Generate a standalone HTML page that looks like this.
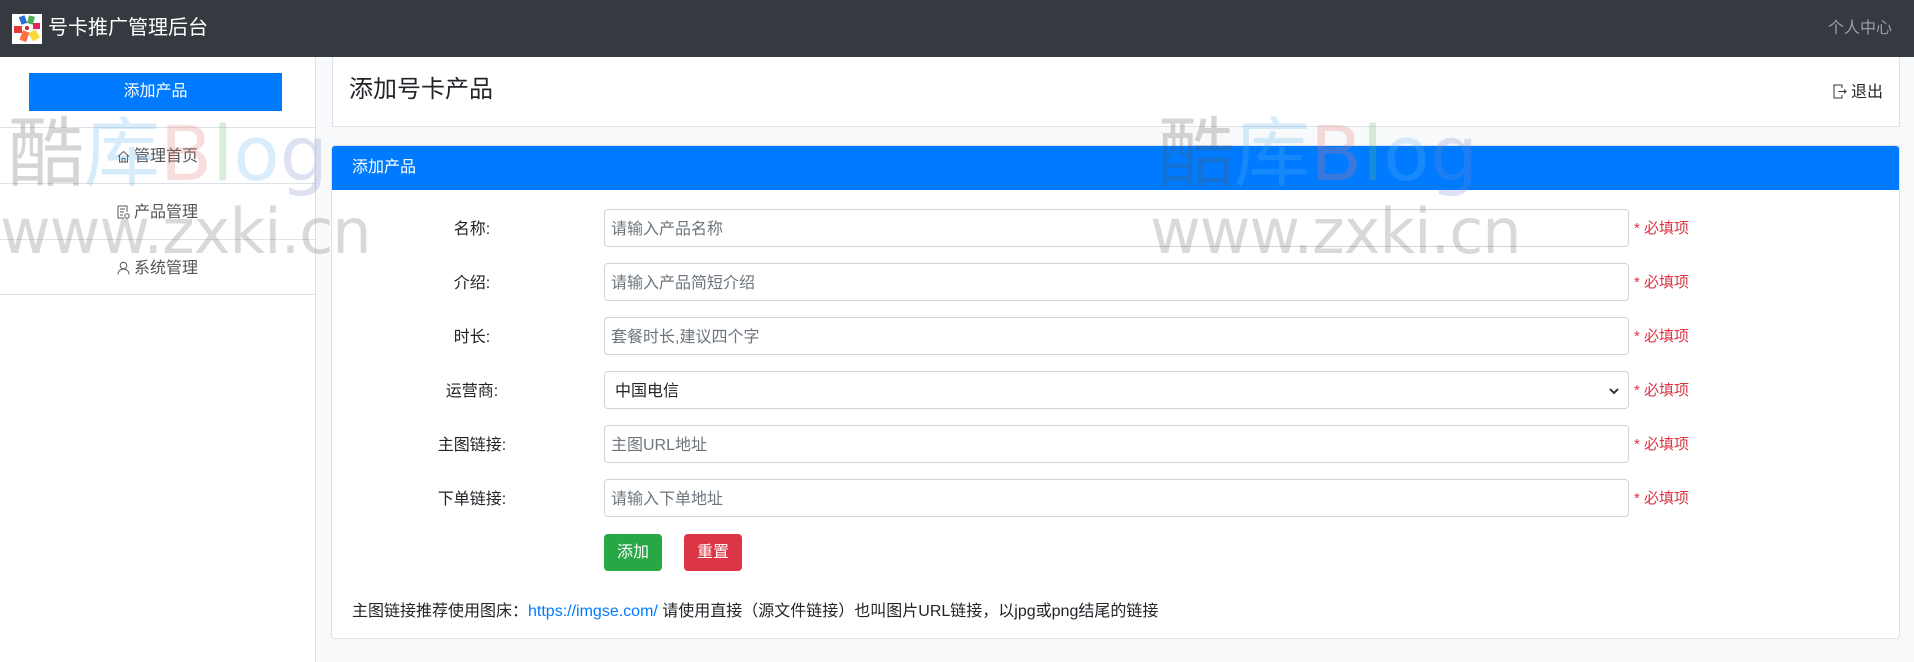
<!DOCTYPE html>
<html><head><meta charset="utf-8">
<style>
*{box-sizing:border-box;margin:0;padding:0}
body{width:1914px;height:662px;overflow:hidden;background:#f8f9fa;font-family:"Liberation Sans","Noto Sans CJK SC",sans-serif;color:#212529;position:relative;font-size:16px}
.nav{position:absolute;left:0;top:0;width:1914px;height:57px;background:#343a40}
.logo{position:absolute;left:12px;top:14px;width:30px;height:30px;background:#fff}
.brand{position:absolute;left:48px;top:13px;font-size:20px;color:#fff;line-height:30px}
.me{position:absolute;left:1828px;top:17px;font-size:16px;color:rgba(255,255,255,.5);line-height:24px}
.side{position:absolute;left:0;top:57px;width:316px;height:605px;background:#fff;border-right:1px solid #dee2e6}
.addbtn{position:absolute;left:29px;top:16px;width:253px;height:38px;background:#007bff;color:#fff;text-align:center;line-height:38px;font-size:16px}
.item{position:absolute;left:0;width:315px;height:56px;border-top:1px solid #dee2e6;color:#555;text-align:center;line-height:58px;font-size:16px}
.item svg{vertical-align:-2px;margin-right:4px}
.card1{position:absolute;left:332px;top:57px;width:1568px;height:70px;background:#fff;border:1px solid #dee2e6;border-top:none}
.card1 h2{position:absolute;left:16px;top:18px;font-size:24px;font-weight:400;line-height:30px}
.logout{position:absolute;left:1500px;top:24px;font-size:16px;line-height:24px}
.card2{position:absolute;left:331px;top:145px;width:1569px;height:494px;background:#fff;border:1px solid #dee2e6;border-radius:4px;overflow:hidden}
.ch{height:44px;background:#007bff;color:#fff;padding-left:20px;line-height:44px;font-size:16px}
.lbl{position:absolute;width:140px;left:70px;text-align:center;font-size:16px;line-height:42px}
.inp{position:absolute;left:272px;width:1025px;height:38px;border:1px solid #ced4da;border-radius:4px;padding-left:6px;line-height:39px;color:#6c757d;font-size:16px}
.req{position:absolute;left:1302px;color:#dc3545;font-size:15px;line-height:40px}
.btn{position:absolute;top:388px;width:58px;height:37px;border-radius:4px;color:#fff;text-align:center;line-height:38px;font-size:16px}
.foot{position:absolute;left:20px;top:454px;font-size:16px;line-height:24px}
.wm{position:absolute;pointer-events:none;opacity:.24;font-family:"DejaVu Sans","Noto Sans CJK SC",sans-serif}
</style></head><body>
<div class="nav">
 <div class="logo"><svg width="30" height="30" viewBox="0 0 30 30"><rect x="8" y="2" width="6" height="8" fill="#2b6fd6" transform="rotate(-20 11 6)"/><rect x="16" y="2" width="6" height="8" fill="#4caf50" transform="rotate(15 19 6)"/><rect x="21" y="9" width="7" height="6" fill="#e91e63"/><rect x="2" y="12" width="8" height="7" fill="#e53935"/><rect x="9" y="17" width="7" height="10" fill="#ff7043" transform="rotate(20 12 22)"/><rect x="18" y="17" width="8" height="9" fill="#fdd835" transform="rotate(-30 22 21)"/><circle cx="15" cy="14" r="2" fill="#c62828"/></svg></div>
 <div class="brand">号卡推广管理后台</div>
 <div class="me">个人中心</div>
</div>
<div class="side">
 <div class="addbtn">添加产品</div>
 <div class="item" style="top:70px"><svg width="13" height="13" viewBox="0 0 13 13" fill="none" stroke="#555"><path d="M1 6.5L6.5 1.5 12 6.5M2.5 5.5V12h8V5.5M5 12V8.5h3V12"/></svg>管理首页</div>
 <div class="item" style="top:126px"><svg width="13" height="14" viewBox="0 0 13 14" fill="none" stroke="#555"><path d="M1 1h9v6M1 1v12h6M3 4h5M3 7h4M3 10h3"/><circle cx="10" cy="11" r="2.2"/></svg>产品管理</div>
 <div class="item" style="top:182px;border-bottom:1px solid #dee2e6"><svg width="13" height="14" viewBox="0 0 13 14" fill="none" stroke="#555"><circle cx="6.5" cy="4.5" r="3.3"/><path d="M1 13.5c0-3.5 2.5-5.5 5.5-5.5s5.5 2 5.5 5.5"/></svg>系统管理</div>
</div>
<div class="card1">
 <h2>添加号卡产品</h2>
 <div class="logout"><svg width="14" height="15" viewBox="0 0 14 15" fill="none" stroke="#333" style="vertical-align:-2px;margin-right:4px"><path d="M9 4V1H1v13h8v-3M5.5 7.5H13M11 5.5l2 2-2 2"/></svg>退出</div>
</div>
<div class="card2">
 <div class="ch">添加产品</div>
 <div class="lbl" style="top:63px">名称:</div><div class="inp" style="top:63px">请输入产品名称</div><div class="req" style="top:63px">* 必填项</div>
 <div class="lbl" style="top:117px">介绍:</div><div class="inp" style="top:117px">请输入产品简短介绍</div><div class="req" style="top:117px">* 必填项</div>
 <div class="lbl" style="top:171px">时长:</div><div class="inp" style="top:171px">套餐时长,建议四个字</div><div class="req" style="top:171px">* 必填项</div>
 <div class="lbl" style="top:225px">运营商:</div><div class="inp" style="top:225px;color:#212529;padding-left:10px">中国电信<svg width="12" height="8" viewBox="0 0 12 8" style="position:absolute;right:8px;top:15px" fill="none" stroke="#343a40" stroke-width="2"><path d="M2 2l4 4 4-4"/></svg></div><div class="req" style="top:225px">* 必填项</div>
 <div class="lbl" style="top:279px">主图链接:</div><div class="inp" style="top:279px">主图URL地址</div><div class="req" style="top:279px">* 必填项</div>
 <div class="lbl" style="top:333px">下单链接:</div><div class="inp" style="top:333px">请输入下单地址</div><div class="req" style="top:333px">* 必填项</div>
 <div class="btn" style="left:272px;background:#28a745">添加</div>
 <div class="btn" style="left:352px;background:#dc3545">重置</div>
 <div class="foot">主图链接推荐使用图床：<span style="color:#007bff">https://imgse.com/</span> 请使用直接（源文件链接）也叫图片URL链接，以jpg或png结尾的链接</div>
</div>
<div class="wm" style="left:8px;top:106px;font-size:76px;line-height:96px;white-space:nowrap"><span style="color:#555">酷</span><span style="color:#5ab4f0">库</span><span style="color:#e57373">B</span><span style="color:#66bb6a">l</span><span style="color:#64b5f6">o</span><span style="color:#7986cb">g</span></div>
<div class="wm" style="left:0;top:192px;font-size:62px;line-height:80px;color:#666;letter-spacing:-1px">www.zxki.cn</div>
<div class="wm" style="left:1158px;top:106px;font-size:76px;line-height:96px;white-space:nowrap"><span style="color:#555">酷</span><span style="color:#5ab4f0">库</span><span style="color:#e57373">B</span><span style="color:#66bb6a">l</span><span style="color:#64b5f6">o</span><span style="color:#7986cb">g</span></div>
<div class="wm" style="left:1150px;top:192px;font-size:62px;line-height:80px;color:#666;letter-spacing:-1px">www.zxki.cn</div>
</body></html>
